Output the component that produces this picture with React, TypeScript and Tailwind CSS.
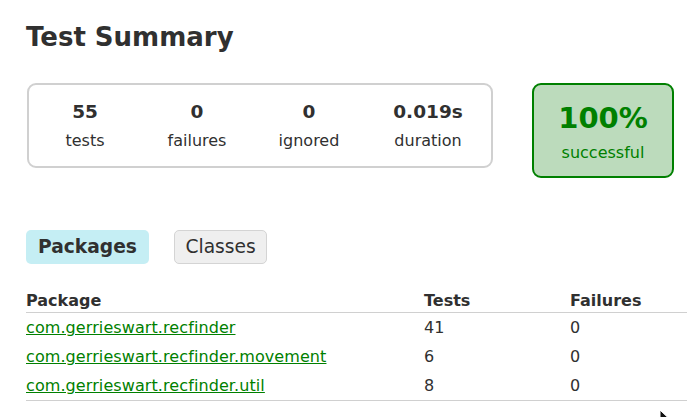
import React from 'react';

type Stat = { value: string; label: string; width: string };

const stats: Stat[] = [
  { value: '55', label: 'tests', width: 'w-[112px]' },
  { value: '0', label: 'failures', width: 'w-[112px]' },
  { value: '0', label: 'ignored', width: 'w-[112px]' },
  { value: '0.019s', label: 'duration', width: 'flex-1' },
];

const packages = [
  { name: 'com.gerrieswart.recfinder', tests: 41, failures: 0 },
  { name: 'com.gerrieswart.recfinder.movement', tests: 6, failures: 0 },
  { name: 'com.gerrieswart.recfinder.util', tests: 8, failures: 0 },
];

export default function App() {
  return (
    <div className="relative h-[417px] w-full overflow-hidden bg-white pl-[26px] text-[#303030] [font-family:'DejaVu_Sans',sans-serif]">
      {/* Title */}
      <h1 className="pt-[22px] text-[26px] font-bold leading-[30px]">Test Summary</h1>

      {/* Summary row */}
      <div className="mt-[31px] flex items-start">
        <div className="ml-[1px] flex h-[85px] w-[466px] rounded-[9px] border-2 border-[#d0d0d0]">
          {stats.map((s) => (
            <div key={s.label} className={`${s.width} pt-[15px] text-center`}>
              <div className="text-[18.5px] font-bold leading-[24px]">{s.value}</div>
              <div className="mt-[7px] text-[16px] leading-[20px]">{s.label}</div>
            </div>
          ))}
        </div>
        <div className="ml-[39px] h-[95px] w-[142px] rounded-[9px] border-2 border-[#008000] bg-[#bcdbbc] pt-[16px] text-center text-[#008000]">
          <div className="text-[29px] font-bold leading-[34px]">100%</div>
          <div className="mt-[8px] text-[16px] leading-[20px]">successful</div>
        </div>
      </div>

      {/* Tabs */}
      <div className="mt-[52px] flex gap-[25px]">
        <div className="h-[34px] rounded-[5px] bg-[#c5eef4] px-[12px] text-[18.67px] font-bold leading-[34px]">
          Packages
        </div>
        <div className="h-[34px] rounded-[5px] border border-[#d4d4d4] bg-[#efefef] px-[10.5px] text-[18.67px] leading-[32px]">
          Classes
        </div>
      </div>

      {/* Table */}
      <table className="mt-[27px] w-full table-fixed border-collapse text-[16px] leading-[20px]">
        <colgroup>
          <col className="w-[398px]" />
          <col className="w-[146px]" />
          <col />
        </colgroup>
        <thead>
          <tr className="border-b border-[#d0d0d0]">
            <th className="pb-[1px] text-left font-bold">Package</th>
            <th className="pb-[1px] text-left font-bold">Tests</th>
            <th className="pb-[1px] text-left font-bold">Failures</th>
          </tr>
        </thead>
        <tbody className="border-b border-[#d0d0d0]">
          {packages.map((p) => (
            <tr key={p.name}>
              <td className="pt-[5px] pb-[4px]">
                <a href="#" className="tracking-[0.09px] text-[#008000] underline">
                  {p.name}
                </a>
              </td>
              <td className="pt-[5px] pb-[4px]">{p.tests}</td>
              <td className="pt-[5px] pb-[4px]">{p.failures}</td>
            </tr>
          ))}
        </tbody>
      </table>

      {/* Mouse pointer */}
      <svg className="absolute left-[659px] top-[409px]" width="12" height="18" viewBox="0 0 12 18">
        <path d="M1 1 L1 15 L4.5 11.5 L7 17 L9 16 L6.5 10.5 L11 10.5 Z" fill="#111" stroke="#fff" strokeWidth="1" />
      </svg>
    </div>
  );
}
